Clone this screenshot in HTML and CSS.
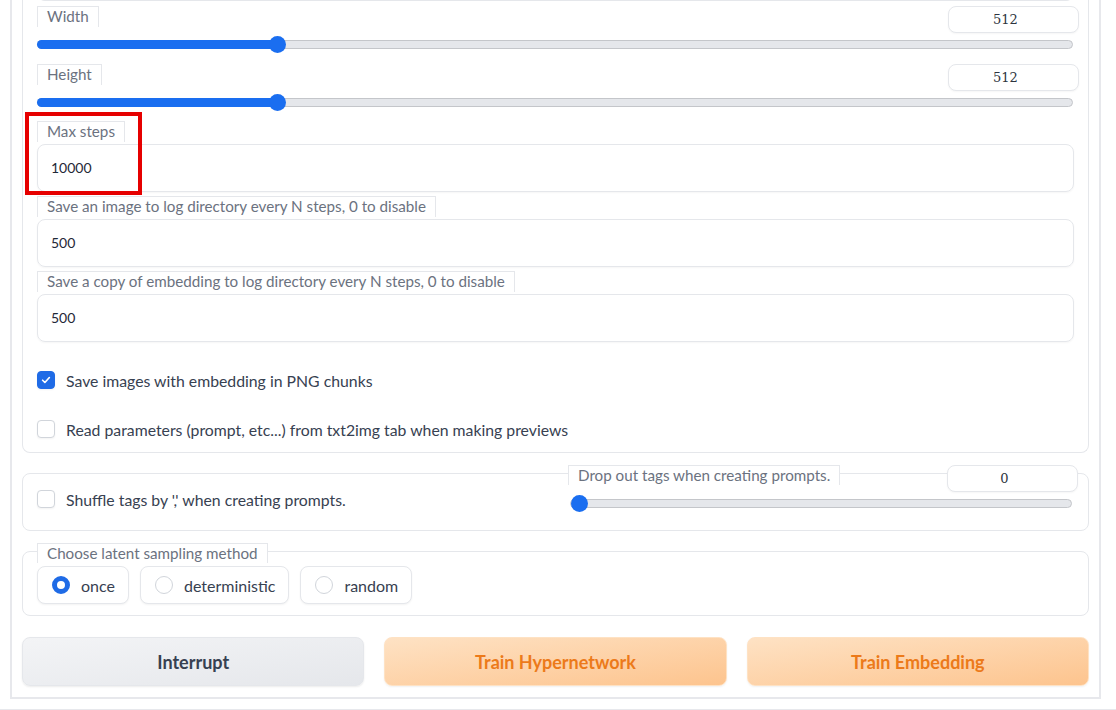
FILE: index.html
```html
<!DOCTYPE html>
<html>
<head>
<meta charset="utf-8">
<link rel="stylesheet" href="styles.css">
</head>
<body>
<div class="page">
  <div class="outer">
    <div class="panel top">
      <div class="prev-input"></div>

      <div class="slider-row first">
        <div class="head">
          <span class="lbl">Width</span>
          <div class="num">512</div>
        </div>
        <div class="track"><div class="fill" style="width:23.1%"></div><div class="thumb" style="left:23.1%"></div></div>
      </div>

      <div class="slider-row">
        <div class="head">
          <span class="lbl">Height</span>
          <div class="num">512</div>
        </div>
        <div class="track"><div class="fill" style="width:23.1%"></div><div class="thumb" style="left:23.1%"></div></div>
      </div>

      <div class="field first-field">
        <span class="lbl">Max steps</span>
        <div class="text-input">10000</div>
      </div>

      <div class="field">
        <span class="lbl">Save an image to log directory every N steps, 0 to disable</span>
        <div class="text-input">500</div>
      </div>

      <div class="field">
        <span class="lbl">Save a copy of embedding to log directory every N steps, 0 to disable</span>
        <div class="text-input">500</div>
      </div>

      <label class="check-row c1">
        <span class="cb checked"><svg viewBox="0 0 16 16" width="12" height="12"><path d="M3.5 8.3l3 3 6-6.6" fill="none" stroke="#fff" stroke-width="2.2" stroke-linecap="round" stroke-linejoin="round"/></svg></span>
        <span class="ctext">Save images with embedding in PNG chunks</span>
      </label>
      <label class="check-row c2">
        <span class="cb"></span>
        <span class="ctext">Read parameters (prompt, etc...) from txt2img tab when making previews</span>
      </label>
    </div>

    <div class="panel shuffle">
      <label class="check-row left-col">
        <span class="cb"></span>
        <span class="ctext">Shuffle tags by ',' when creating prompts.</span>
      </label>
      <div class="right-col">
        <div class="head">
          <span class="lbl">Drop out tags when creating prompts.</span>
          <div class="num">0</div>
        </div>
        <div class="track"><div class="thumb zero"></div></div>
      </div>
    </div>

    <div class="panel latent">
      <span class="lbl">Choose latent sampling method</span>
      <div class="radios">
        <div class="radio"><span class="rc on"></span>once</div>
        <div class="radio"><span class="rc"></span>deterministic</div>
        <div class="radio"><span class="rc"></span>random</div>
      </div>
    </div>

    <div class="buttons">
      <div class="btn gray">Interrupt</div>
      <div class="btn orange">Train Hypernetwork</div>
      <div class="btn orange">Train Embedding</div>
    </div>
  </div>
  <div class="footer"></div>
  <div class="annot"></div>
</div>
</body>
</html>
```

FILE: styles.css
```css
* { box-sizing: border-box; }
html, body { margin: 0; padding: 0; background: #fff; }
body {
  font-family: Lato, "Liberation Sans", sans-serif;
  color: #374151;
  overflow: hidden;
  height: 710px;
}
.page { position: relative; width: 1116px; }

.outer {
  display: flow-root;
  margin-left: 10px;
  width: 1091px;
  border: 2px solid #e7e8ec;
  border-top: none;
  padding: 0 10px 11px 10px;
}

.panel {
  border: 1px solid #e5e7eb;
  border-radius: 8px;
  background: #fff;
}

.panel.top {
  border-top: none;
  border-top-left-radius: 0;
  border-top-right-radius: 0;
  padding: 0 14px 13px 14px;
}

.prev-input {
  height: 30px;
  margin-top: -29px;
  border: 1px solid #e5e7eb;
  border-top: none;
  border-radius: 0 0 8px 8px;
}

.lbl {
  display: block;
  width: max-content;
  height: 21px;
  line-height: 19px;
  padding: 0 9px;
  font-size: 15.2px;
  color: #6b7280;
  background: #fff;
  border: 1px solid #e5e7eb;
  border-bottom: none;
  white-space: nowrap;
}

.head {
  display: flex;
  justify-content: space-between;
  align-items: flex-start;
  height: 27px;
  margin-right: -5px;
}

.num {
  width: 131px;
  height: 27px;
  border: 1px solid #e5e7eb;
  border-radius: 8px;
  text-align: center;
  padding-right: 16px;
  line-height: 25px;
  font-family: "DejaVu Serif", "Liberation Serif", serif;
  font-size: 13px;
  color: #2d3440;
  background: #fff;
  box-shadow: 0 1px 2px rgba(0,0,0,0.04);
}

.slider-row { margin-top: 15px; }
.slider-row.first { margin-top: 5px; }

.track {
  position: relative;
  height: 9px;
  margin-top: 7px;
  margin-right: 1px;
  border: 1px solid #c4c6ca;
  border-radius: 5px;
  background: #e5e7eb;
}
.fill {
  position: absolute;
  left: -1px; top: -1px; bottom: -1px;
  background: #1a6ef0;
  border-radius: 5px 0 0 5px;
}
.thumb {
  position: absolute;
  top: 50%;
  width: 17px; height: 17px;
  margin-left: -8px;
  margin-top: -8.5px;
  border-radius: 50%;
  background: #1a6ef0;
}
.thumb.zero { left: 8px; }

.field { margin-top: 4px; }
.field.first-field { margin-top: 14px; }

.text-input {
  height: 48px;
  margin-top: 2px;
  border: 1px solid #e5e7eb;
  border-radius: 8px;
  padding: 0 13px;
  line-height: 46px;
  font-size: 14px;
  color: #1f2937;
  box-shadow: 0 1px 2px rgba(0,0,0,0.04);
}

.check-row {
  display: flex;
  align-items: center;
  height: 20px;
}
.check-row.c1 { margin-top: 28px; }
.check-row.c2 { margin-top: 29px; }

.cb {
  width: 18px; height: 18px;
  border: 1px solid #d1d5db;
  border-radius: 4px;
  background: #fff;
  margin-right: 11px;
  display: flex;
  align-items: center;
  justify-content: center;
  flex: none;
  box-shadow: 0 1px 2px rgba(0,0,0,0.05);
}
.cb.checked { background: #1f6be6; border-color: #1f6be6; }

.ctext { font-size: 15.8px; color: #374151; }

.annot {
  position: absolute;
  left: 25px;
  top: 112px;
  width: 117px;
  height: 83px;
  border: 4px solid #e60000;
}

.panel.shuffle {
  margin-top: 20px;
  height: 58px;
  display: flex;
  align-items: flex-start;
  padding: 0 10px 0 14px;
}
.shuffle .left-col { flex: 1; margin-top: 15px; }
.shuffle .right-col {
  width: 510px;
  margin-top: -9px;
}
.shuffle .right-col .head { margin-right: 0; }
.shuffle .right-col .lbl { height: 20px; }
.shuffle .right-col .track { margin-top: 7px; margin-right: 6px; margin-left: 2px; }

.panel.latent {
  margin-top: 20px;
  height: 65px;
  padding: 0 14px;
}
.latent .lbl {
  margin-top: -9px;
  height: 20px;
}
.radios {
  display: flex;
  gap: 11px;
  margin-top: 3px;
}
.radio {
  display: flex;
  align-items: center;
  height: 38px;
  padding: 0 13px 0 14px;
  border: 1px solid #e5e7eb;
  border-radius: 8px;
  font-size: 16px;
  color: #374151;
  background: #fff;
  box-shadow: 0 1px 2px rgba(0,0,0,0.05);
}
.rc {
  width: 18px; height: 18px;
  border-radius: 50%;
  border: 1px solid #d1d5db;
  margin-right: 11px;
  background: #fff;
}
.rc.on {
  border: 5px solid #1f6be6;
  background: #fff;
}

.buttons {
  display: flex;
  gap: 20px;
  margin-top: 21px;
}
.btn {
  flex: 1;
  height: 49px;
  border-radius: 8px;
  display: flex;
  align-items: center;
  justify-content: center;
  font-size: 18px;
  font-weight: 700;
}
.btn.gray {
  background: linear-gradient(to bottom right, #f3f4f6, #e5e7eb);
  border: 1px solid #e5e7eb;
  color: #374151;
  box-shadow: 0 1px 2px rgba(0,0,0,0.08);
}
.btn.orange {
  background: linear-gradient(to bottom right, #fee2c4, #fdc48e);
  border: 1px solid #fee2c4;
  color: #ec7a1a;
  box-shadow: 0 1px 2px rgba(0,0,0,0.06);
}

.footer {
  margin-top: 10px;
  height: 2px;
  background: #e7e8ec;
}
```
